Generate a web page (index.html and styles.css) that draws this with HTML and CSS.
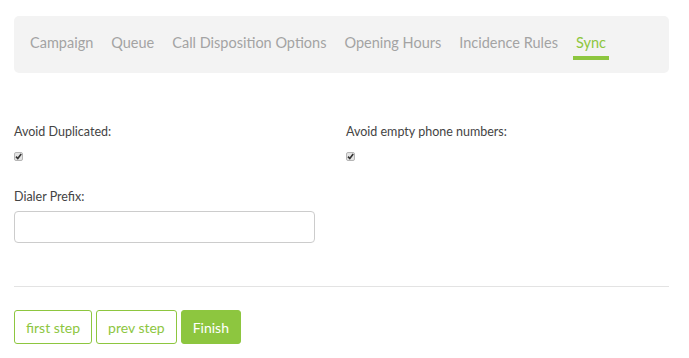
FILE: index.html
```html
<!DOCTYPE html>
<html lang="en">
<head>
  <meta charset="utf-8" />
  <title>Campaign Wizard - Sync</title>
  <link rel="stylesheet" href="styles.css">
</head>
<body>
  <div class="wizard">
    <ul class="steps">
      <li>Campaign</li>
      <li>Queue</li>
      <li>Call Disposition Options</li>
      <li>Opening Hours</li>
      <li>Incidence Rules</li>
      <li class="active">Sync</li>
    </ul>

    <div class="form-row first">
      <div class="field">
        <label>Avoid Duplicated:</label>
        <span class="check"><svg width="9" height="9" viewBox="0 0 9 9"><path d="M2 4.6 L3.8 6.6 L7.2 2" fill="none" stroke="#333" stroke-width="1.6"/></svg></span>
      </div>
      <div class="field">
        <label>Avoid empty phone numbers:</label>
        <span class="check"><svg width="9" height="9" viewBox="0 0 9 9"><path d="M2 4.6 L3.8 6.6 L7.2 2" fill="none" stroke="#333" stroke-width="1.6"/></svg></span>
      </div>
    </div>
    <div class="form-row">
      <div class="field">
        <label for="prefix" class="tight">Dialer Prefix:</label>
        <input type="text" id="prefix" class="text-input">
      </div>
    </div>

    <hr>

    <div class="actions">
      <button class="btn btn-outline">first step</button>
      <button class="btn btn-outline">prev step</button>
      <button class="btn btn-primary">Finish</button>
    </div>
  </div>
</body>
</html>
```

FILE: styles.css
```css
body {
  font-family: Lato, 'Open Sans', sans-serif;
  margin: 0;
  padding: 0;
  background-color: #fff;
  color: #555;
}
.wizard {
  padding: 16px 20px 0 14px;
}
.steps {
  list-style: none;
  margin: 0;
  padding: 0 16px;
  height: 57px;
  display: flex;
  gap: 18px;
  background-color: #f3f3f3;
  border-radius: 5px;
}
.steps li {
  font-size: 14.5px;
  color: #a3a3a3;
  padding-top: 18px;
  height: 39px;
  box-sizing: border-box;
  position: relative;
}
.steps li.active {
  color: #8dc63f;
}
.steps li.active::after {
  content: '';
  position: absolute;
  left: -3px;
  right: -3px;
  top: 40px;
  height: 4px;
  background: #8dc63f;
}
.form-row {
  display: flex;
}
.form-row.first {
  margin-top: 51px;
}
.field {
  width: 332px;
  flex-shrink: 0;
  margin-bottom: 28px;
}
label {
  display: block;
  font-size: 12.5px;
  color: #444;
  margin-bottom: 12px;
  line-height: 16px;
}
label.tight {
  margin-bottom: 6px;
}
.check {
  display: block;
  width: 9px;
  height: 9px;
  box-sizing: border-box;
  border: 1px solid #b5b5b5;
  border-radius: 2px;
  background: #e4e4e4;
  position: relative;
}
.check svg {
  position: absolute;
  left: -1px;
  top: -1px;
}
.text-input {
  display: block;
  width: 301px;
  height: 32px;
  box-sizing: border-box;
  border: 1px solid #ccc;
  border-radius: 4px;
  padding: 4px 8px;
  font-family: inherit;
}
hr {
  border: 0;
  border-top: 1px solid #e3e3e3;
  margin: 15px 0 23px;
}
.actions {
  display: flex;
  gap: 4px;
}
.btn {
  font-family: inherit;
  font-size: 14px;
  height: 34px;
  padding: 0 11px;
  border-radius: 3px;
  border: 1px solid #8dc63f;
  cursor: pointer;
}
.btn-outline {
  background: #fff;
  color: #8dc63f;
}
.btn-primary {
  background: #8dc63f;
  color: #fff;
}
```
